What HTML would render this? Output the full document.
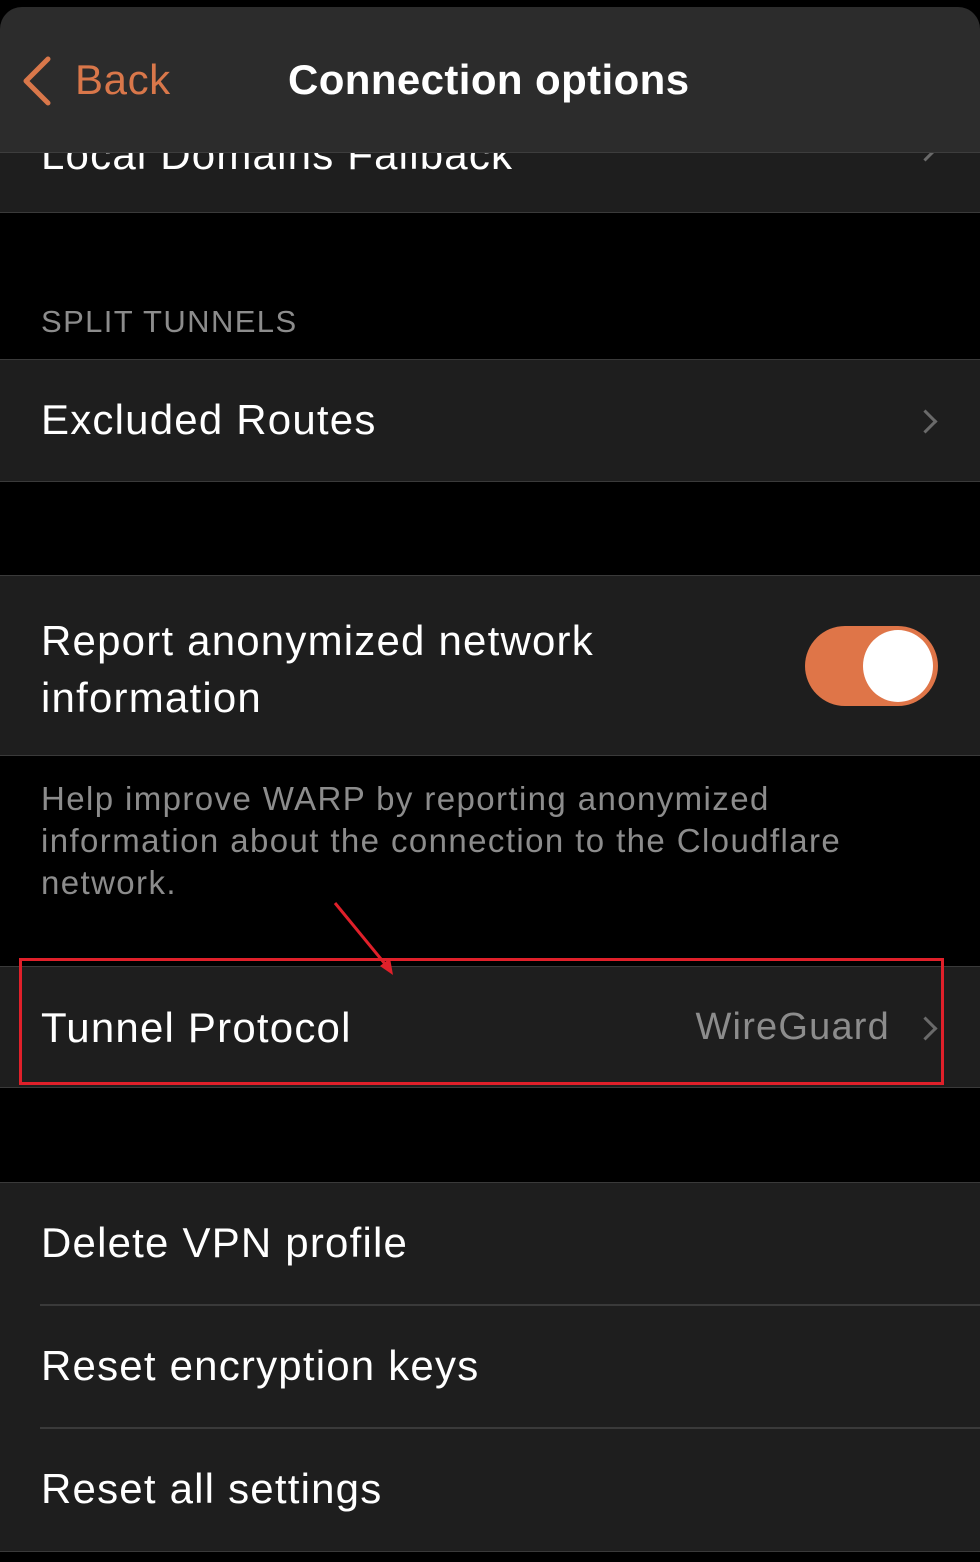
<!DOCTYPE html>
<html><head><style>
*{margin:0;padding:0;box-sizing:border-box}
body{width:980px;height:1562px;background:#000;font-family:"Liberation Sans",sans-serif;color:#fff;position:relative;overflow:hidden}
.abs{position:absolute}
.row{position:absolute;left:0;width:980px;background:#1e1e1e;border-top:1.5px solid #3a3a3a;border-bottom:1.5px solid #3a3a3a}
.t{position:absolute;left:41px;font-size:42px;line-height:48px;white-space:nowrap;letter-spacing:1.2px}
.chev{position:absolute;right:46px;width:17px;height:17px;border-right:3px solid #6a6a6a;border-top:3px solid #6a6a6a;transform:rotate(45deg)}
</style></head><body>
<div class="row" style="top:120px;height:93px"><div class="t" style="top:10px;">Local Domains Fallback</div><div class="chev" style="top:20px"></div></div>
<div class="abs" style="top:7px;left:0;width:980px;height:146px;background:#2c2c2c;border-radius:22px 22px 0 0;border-bottom:1.5px solid #3d3d3d"></div>
<svg class="abs" style="left:20px;top:55px" width="34" height="52"><path d="M28 4 L6 26 L28 48" stroke="#d9774a" stroke-width="5" fill="none" stroke-linecap="round" stroke-linejoin="round"/></svg>
<div class="abs" style="left:75px;top:56px;font-size:42px;color:#d9774a;letter-spacing:0.6px">Back</div>
<div class="abs" style="left:288px;top:56px;font-size:42px;font-weight:bold;letter-spacing:0.4px">Connection options</div>
<div class="abs" style="left:41px;top:304px;font-size:31px;color:#8c8c8c;letter-spacing:1.4px">SPLIT TUNNELS</div>
<div class="row" style="top:359px;height:123px"><div class="t" style="top:36px">Excluded Routes</div><div class="chev" style="top:53px"></div></div>
<div class="row" style="top:575px;height:181px"><div class="t" style="top:36px;line-height:57px">Report anonymized network<br>information</div>
<div class="abs" style="left:805px;top:50px;width:133px;height:80px;border-radius:40px;background:#df7548"><div class="abs" style="right:5px;top:4px;width:70px;height:72px;border-radius:50%;background:#fff"></div></div></div>
<div class="abs" style="left:41px;top:778px;font-size:33px;line-height:42px;color:#8c8c8c;letter-spacing:1.4px">Help improve WARP by reporting anonymized<br>information about the connection to the Cloudflare<br>network.</div>
<div class="row" style="top:966px;height:122px"><div class="t" style="top:37px">Tunnel Protocol</div>
<div class="abs" style="right:90px;top:39px;font-size:38px;color:#8c8c8c;letter-spacing:1.2px">WireGuard</div><div class="chev" style="top:53px"></div></div>
<div class="abs" style="left:19px;top:958px;width:925px;height:127px;border:3px solid #e0202a"></div>
<svg class="abs" style="left:330px;top:898px" width="70" height="85"><path d="M5 5 L60 72" stroke="#e0202a" stroke-width="3"/><path d="M63 77 L50 68 L60 60 Z" fill="#e0202a"/></svg>
<div class="row" style="top:1182px;height:370px"></div>
<div class="abs" style="left:40px;top:1304px;width:940px;height:1.5px;background:#3a3a3a"></div>
<div class="abs" style="left:40px;top:1427px;width:940px;height:1.5px;background:#3a3a3a"></div>
<div class="t" style="top:1219px">Delete VPN profile</div>
<div class="t" style="top:1342px">Reset encryption keys</div>
<div class="t" style="top:1465px">Reset all settings</div>
</body></html>
